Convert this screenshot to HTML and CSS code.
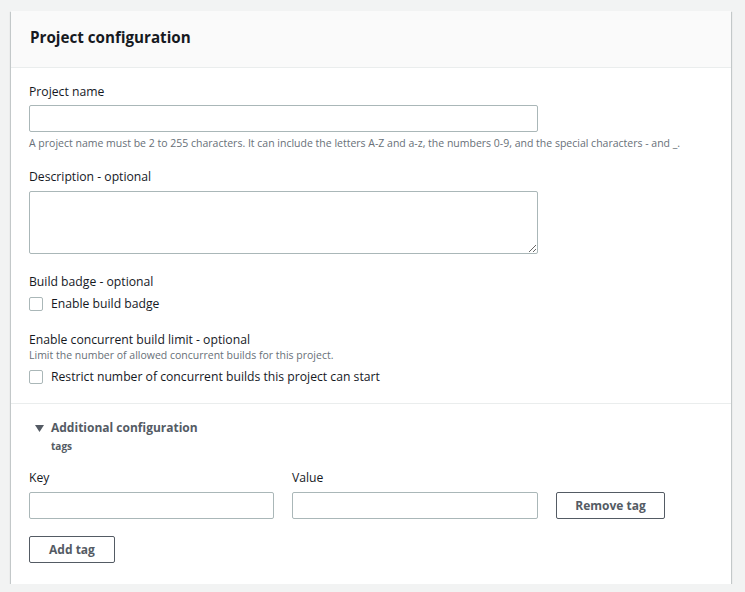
FILE: index.html
```html
<!DOCTYPE html>
<html>
<head>
<meta charset="utf-8">
<link rel="stylesheet" href="styles.css">
</head>
<body>
<div class="card">
  <div class="card-header"><h2>Project configuration</h2></div>
  <div class="card-body">
    <div class="field first">
      <label class="label name">Project name</label>
      <input class="input wide" type="text">
      <div class="help">A project name must be 2 to 255 characters. It can include the letters A-Z and a-z, the numbers 0-9, and the special characters - and _.</div>
    </div>
    <div class="field">
      <label class="label">Description - optional</label>
      <textarea class="textarea wide"></textarea>
    </div>
    <div class="field badge">
      <label class="label for-check">Build badge - optional</label>
      <label class="check"><input type="checkbox"><span>Enable build badge</span></label>
    </div>
    <div class="field last">
      <label class="label tight">Enable concurrent build limit - optional</label>
      <div class="help small">Limit the number of allowed concurrent builds for this project.</div>
      <label class="check"><input type="checkbox"><span>Restrict number of concurrent builds this project can start</span></label>
    </div>
  </div>
  <div class="section">
    <div class="expander">
      <svg class="caret" width="9" height="7" viewBox="0 0 9 7"><path d="M0 0H9L4.5 7Z" fill="#545b64"/></svg>
      <span>Additional configuration</span>
    </div>
    <div class="sub">tags</div>
    <div class="tag-row">
      <div class="tag-col">
        <label class="label">Key</label>
        <input class="input" type="text">
      </div>
      <div class="tag-col">
        <label class="label">Value</label>
        <input class="input" type="text">
      </div>
      <button class="btn remove">Remove tag</button>
    </div>
    <button class="btn add">Add tag</button>
  </div>
</div>
</body>
</html>
```
FILE: styles.css
```css
* { box-sizing: border-box; }
html, body { margin: 0; }
body {
  background: #f2f3f3;
  padding: 11px 0 0 11px;
  font-family: "Open Sans", "Noto Sans", sans-serif;
  color: #16191f;
}
.card {
  width: 720px;
  background: #fff;
  box-shadow: 0 1px 1px 0 rgba(0,28,36,.3), 1px 1px 1px 0 rgba(0,28,36,.15), -1px 1px 1px 0 rgba(0,28,36,.15);
}
.card-header {
  height: 57px;
  background: #fafafa;
  border-bottom: 1px solid #eaeded;
  padding: 0 19px 4px;
  display: flex;
  align-items: center;
}
.card-header h2 {
  margin: 0;
  font-size: 15.2px;
  font-weight: 700;
  line-height: 20px;
}
.card-body {
  padding: 14px 18px 16px;
  border-bottom: 1px solid #eaeded;
}
.field { display: flex; flex-direction: column; align-items: flex-start; margin-bottom: 18px; }
.field.first { margin-bottom: 16px; }
.field.badge { margin-bottom: 17px; }
.field.last { margin-bottom: 0; }
.label {
  font-size: 12.2px;
  line-height: 20px;
  margin-bottom: 4px;
  display: block;
}
.label.name { margin-bottom: 3px; }
.label.for-check { margin-bottom: 2px; }
.label.tight { margin-bottom: 0; line-height: 17px; }
.input {
  height: 27px;
  border: 1px solid #aab7b8;
  border-radius: 2px;
  padding: 0 8px;
  font: inherit;
  outline: none;
}
.wide { width: 509px; }
.textarea {
  height: 63px;
  border: 1px solid #aab7b8;
  border-radius: 2px;
  font: inherit;
  outline: none;
  resize: vertical;
}
.help {
  font-size: 10.5px;
  line-height: 16px;
  color: #687078;
  margin-top: 3px;
}
.help.small { margin-top: 0; line-height: 14px; margin-bottom: 5px; }
.check {
  display: flex;
  align-items: center;
  font-size: 12.2px;
  line-height: 20px;
}
.check input {
  appearance: none;
  -webkit-appearance: none;
  width: 14px;
  height: 14px;
  margin: 0 8px 0 0;
  border: 1px solid #aab7b8;
  border-radius: 2px;
  background: #fff;
}
.section { padding: 14px 18px 21px; }
.expander {
  display: flex;
  align-items: center;
  font-size: 12px;
  font-weight: 700;
  line-height: 20px;
  color: #545b64;
}
.caret { margin: 0 7px 0 6px; }
.sub {
  font-size: 10px;
  font-weight: 700;
  line-height: 16px;
  color: #545b64;
  padding-left: 22px;
  margin-bottom: 14px;
}
.tag-row { display: flex; align-items: flex-end; gap: 18px; margin-bottom: 17px; }
.tag-col { display: flex; flex-direction: column; }
.tag-col:first-child .input { width: 245px; }
.tag-col:nth-child(2) .input { width: 246px; }
.btn {
  height: 27px;
  background: #fff;
  border: 1px solid #545b64;
  border-radius: 2px;
  color: #545b64;
  font-family: inherit;
  font-size: 12px;
  font-weight: 700;
  padding: 0;
}
.remove { width: 109px; }
.add { width: 86px; display: block; }
```
